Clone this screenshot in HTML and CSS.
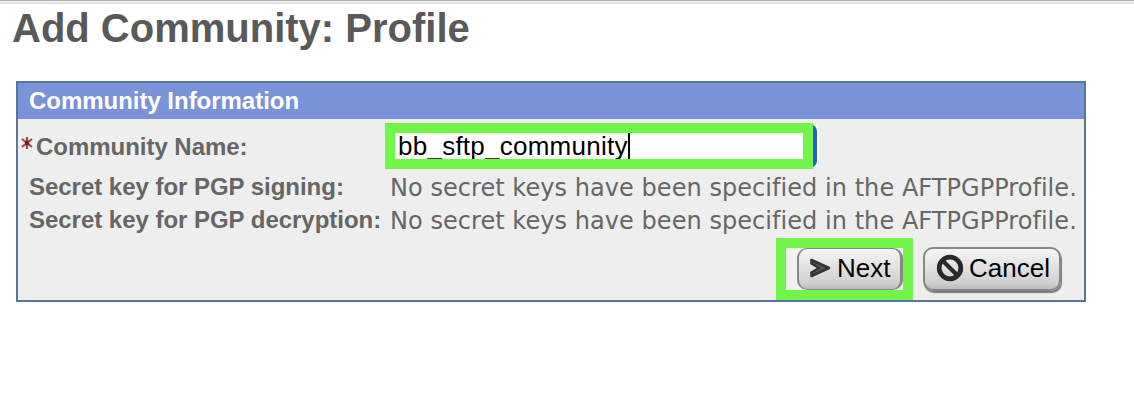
FILE: index.html
```
<!DOCTYPE html>
<html lang="en">
<head>
<meta charset="utf-8">
<title>Add Community: Profile</title>
<link rel="stylesheet" href="styles.css">
</head>
<body>
<div class="topline"></div>
<h1 class="title">Add Community: Profile</h1>
<section class="panel">
  <h2 class="panel-head">Community Information</h2>
  <div class="row row-name">
    <div class="label">
      <svg class="required" width="12" height="14" viewBox="0 0 12 14"><path d="M6 1v12M1 3l10 8M11 3l-10 8" stroke="#9a4a48" stroke-width="2.2" fill="none"/><circle cx="6" cy="7" r="2.2" fill="#841410"/></svg>
      <span class="label-name">Community Name:</span>
    </div>
    <div class="focus-ring"><div class="field"><span class="value">bb_sftp_community</span><span class="caret"></span></div></div>
  </div>
  <div class="row row-key">
    <div class="label"><span class="label-sign">Secret key for PGP signing:</span></div>
    <div class="info">No secret keys have been specified in the AFTPGPProfile.</div>
  </div>
  <div class="row row-key">
    <div class="label"><span class="label-decrypt">Secret key for PGP decryption:</span></div>
    <div class="info">No secret keys have been specified in the AFTPGPProfile.</div>
  </div>
  <div class="actions">
    <div class="highlight">
      <div class="button next">
        <svg width="22" height="20" viewBox="0 0 22 20"><path d="M2.5 2 20 10 2.5 18V14.5L10 10 2.5 5.5Z" fill="#555" stroke="#333" stroke-width="2.6" stroke-linejoin="round"/></svg>
        <span>Next</span>
      </div>
    </div>
    <div class="button cancel">
      <svg width="28" height="28" viewBox="0 0 28 28"><circle cx="14" cy="14" r="10.8" fill="none" stroke="#292929" stroke-width="4.8"/><path d="M6.5 6.5l15 15" stroke="#292929" stroke-width="4.2"/></svg>
      <span>Cancel</span>
    </div>
  </div>
</section>
</body>
</html>
```
FILE: styles.css
```
* { box-sizing: border-box; }
body { margin: 0; background: #fff; color: #666; font-family: "Liberation Sans", Arial, sans-serif; }
.topline { height: 4px; border-top: 1px solid #aaa; border-bottom: 2px solid #dfdddf; background: #f7f7f7; }
.title { margin: 0 0 0 12px; height: 77px; padding-top: 1px; font-size: 40px; line-height: 46px; color: #595959; white-space: nowrap; }
.panel { width: 1070px; height: 221px; margin-left: 16px; border: 2px solid #5a759c; background: #eee; }
.panel-head { margin: 0; height: 36px; padding-left: 11px; background: #7a92d8; color: #fff; font-size: 24px; line-height: 36px; letter-spacing: -0.03px; }
.row { display: grid; grid-template-columns: 367px 1fr; }
.row-name { height: 52px; padding-top: 4px; }
.row-key { height: 33px; }
.label { padding-left: 11px; font-size: 24px; font-weight: bold; line-height: 31px; letter-spacing: -0.03px; white-space: nowrap; }
.row-name .label { display: flex; padding: 7px 0 0 3px; gap: 3px; line-height: 33px; }
.required { margin-top: 6px; }
.focus-ring { width: 434px; height: 46px; background: #fff; border-radius: 0 8px 8px 0; box-shadow: inset -2px 0 #fff, inset -6px 0 #2361cb; border-block: 1px solid #fff; }
.field { display: flex; width: 428px; height: 46px; margin-top: -1px; border: 10px solid #71f54a; background: #fff; overflow: hidden; color: #000; }
.value { padding-left: 3px; font-size: 26px; line-height: 26px; letter-spacing: 0.25px; white-space: nowrap; }
.caret { width: 2px; height: 26px; background: #000; }
.info { padding-left: 5px; font-family: "DejaVu Sans", Verdana, sans-serif; font-size: 24px; line-height: 35px; letter-spacing: 0.05px; white-space: nowrap; }
.actions { display: flex; justify-content: flex-end; gap: 10px; padding: 1px 23px 0 0; }
.highlight { display: flex; justify-content: flex-end; width: 137px; height: 62px; border: 10px solid #71f54a; background: #f1f1f1; }
.button { display: flex; align-items: center; border: 2px solid #888; border-radius: 10px; background: linear-gradient(#f5f5f5, #d0d0d0 85%, #bbb); color: #000; font-size: 26px; white-space: nowrap; }
.next { width: 106px; height: 42px; padding: 0 0 2px 10px; gap: 6px; border-width: 1px 3px 1px 2px; }
.cancel { width: 138px; height: 44px; margin-top: 9px; padding: 0 0 2px 11px; gap: 5px; box-shadow: 1px 2px 1px #777; }
```
